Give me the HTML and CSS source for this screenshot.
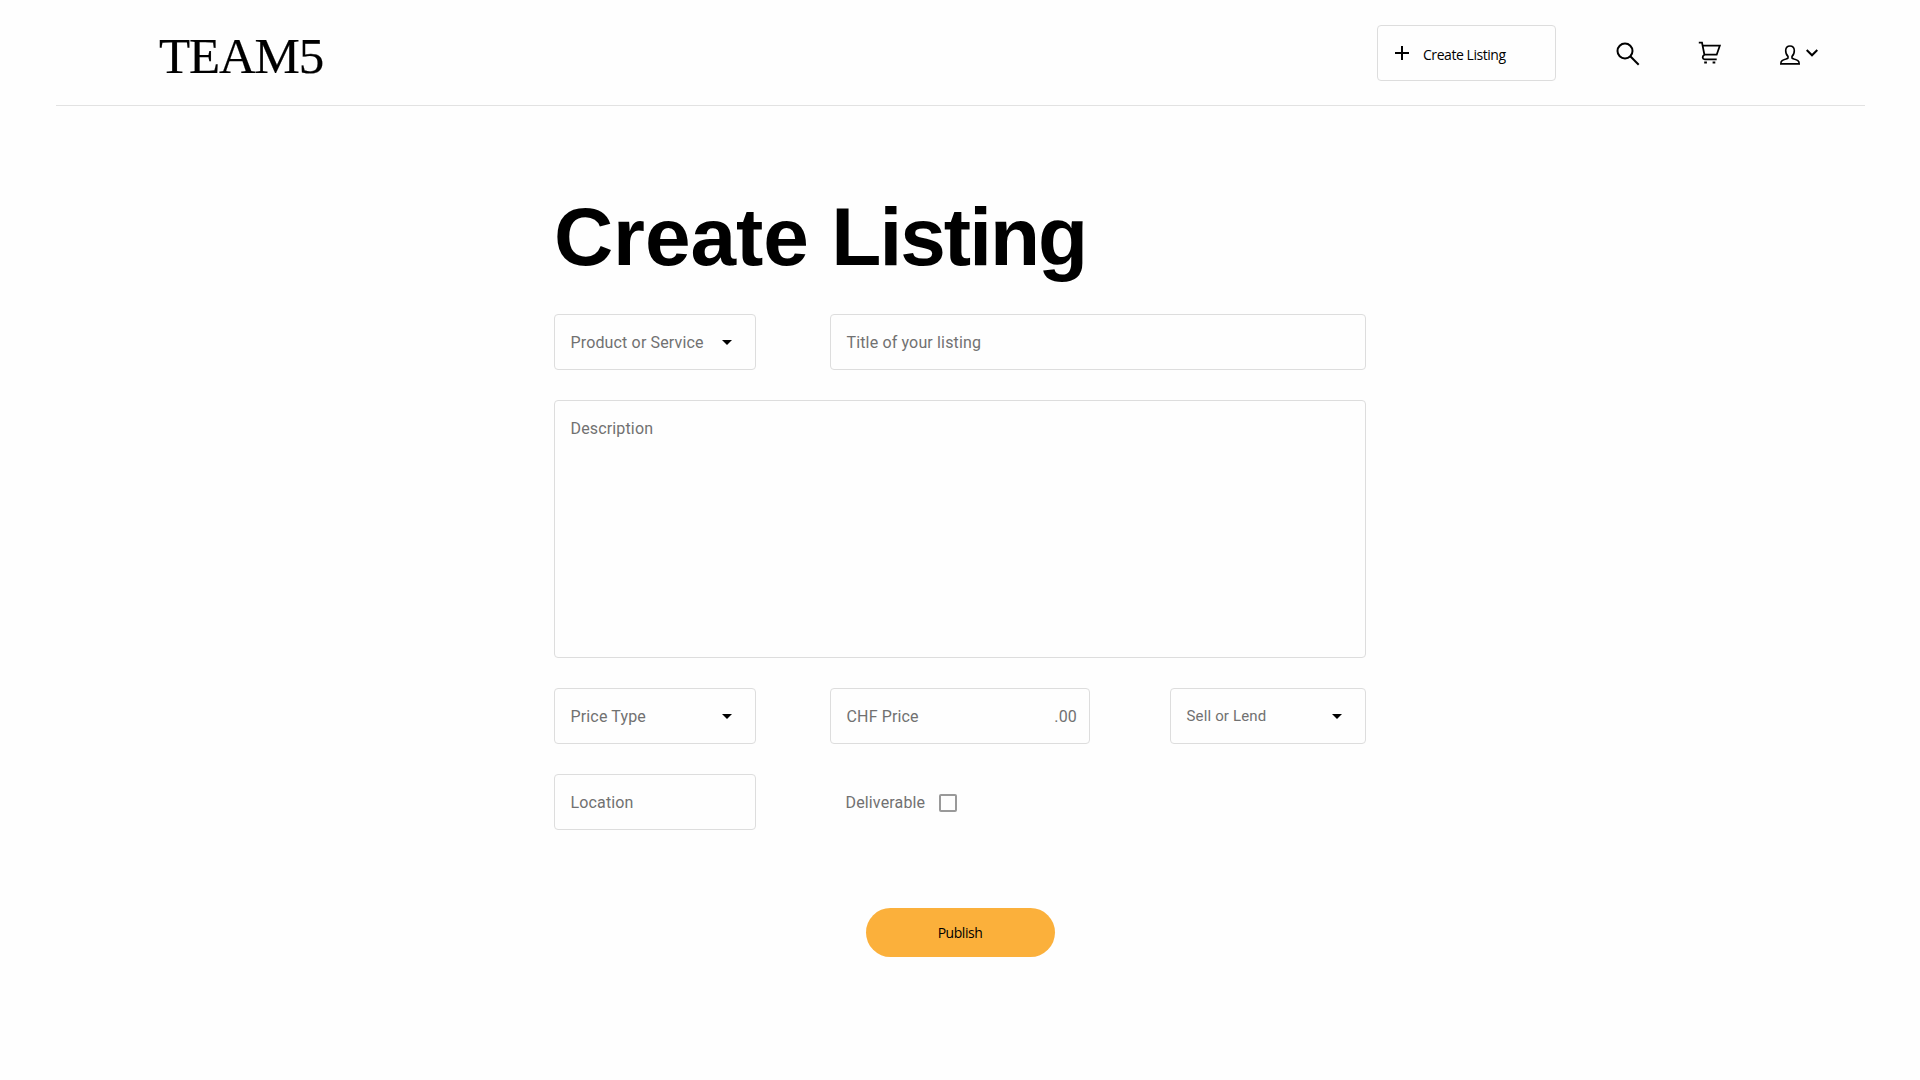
FILE: index.html
```html
<!DOCTYPE html>
<html lang="en">
<head>
<meta charset="utf-8">
<title>Create Listing</title>
<link rel="stylesheet" href="styles.css">
</head>
<body>
<header class="header">
  <a class="logo">TEAM5</a>
  <nav class="nav">
    <button class="create">
      <svg width="14" height="14" viewBox="0 0 14 14"><path d="M7 0v14M0 7h14" stroke="#000" stroke-width="2"/></svg>
      <span class="create-label">Create Listing</span>
    </button>
    <svg class="search" width="24" height="24" viewBox="0 0 24 24" fill="none" stroke="#000" stroke-width="2"><circle cx="9" cy="9" r="7.5"/><path d="M14.3 14.3L22.7 22.7"/></svg>
    <svg class="cart" width="24" height="24" viewBox="0 0 24 24" fill="none" stroke="#000" stroke-width="1.8"><path d="M.8 1.6H4L6.4 13.7H18.7L21.8 4.7H4.6M6.4 13.7Q4.4 15 4.7 16.7Q5 18.3 6.7 18.3H18.7"/><path d="M6.2 21.6h2.7M14.6 21.6h2.7" stroke-width="2"/></svg>
    <div class="account">
      <svg width="20" height="20" viewBox="0 0 20 20" fill="none" stroke="#000" stroke-width="1.6"><path d="M8 11.4C6.1 9.7 5.6 7.4 5.7 5.3C5.9 2.4 7.6 1 10 1S14.1 2.4 14.3 5.3C14.4 7.4 13.9 9.7 12 11.4V13Q12.3 13.5 14 14.1C17.4 15.1 19.2 15.8 19.2 18.9H.8C.8 15.8 2.6 15.1 6 14.1Q7.7 13.5 8 13Z"/></svg>
      <svg class="chevron" width="12" height="8" viewBox="0 0 12 8" fill="none" stroke="#000" stroke-width="2"><path d="M.7 1L6 6.3L11.3 1"/></svg>
    </div>
  </nav>
</header>
<main class="main">
  <h1 class="title">Create <span class="tight">Listing</span></h1>
  <form class="form">
    <div class="row">
      <div class="field short">Product or Service<i class="arrow"></i></div>
      <div class="field grow">Title of your listing</div>
    </div>
    <div class="field description">Description</div>
    <div class="row">
      <div class="field short">Price Type<i class="arrow"></i></div>
      <div class="field price"><span>CHF Price</span><span class="cents">.00</span></div>
      <div class="field sale"><span class="sale-label">Sell or Lend</span><i class="arrow"></i></div>
    </div>
    <div class="row">
      <div class="field short">Location</div>
      <label class="deliverable">Deliverable<span class="box"></span></label>
    </div>
    <button class="publish" type="button">Publish</button>
  </form>
</main>
</body>
</html>
```
FILE: styles.css
```css
* { box-sizing: border-box; }
body { margin: 0; background: #fefefe; color: #000; font-family: Roboto, sans-serif; }
button { font-family: "Open Sans", "Noto Sans", sans-serif; color: #000; }
svg { display: block; flex: none; }

.header { display: flex; justify-content: space-between; height: 106px; margin: 0 55px 0 56px; padding: 0 47px 0 103px; border-bottom: 1px solid #e2e2e2; }
.logo { font: 51px/60px "Liberation Serif", serif; letter-spacing: -1.2px; padding-top: 26px; -webkit-text-stroke: 0.2px #000; }
.nav { display: flex; align-items: flex-start; padding-top: 25px; }
.create { display: flex; align-items: center; gap: 14px; width: 179px; height: 56px; padding: 0 0 0 17px; border: 1px solid #ddd; border-radius: 4px; background: #fefefe; font-size: 14px; letter-spacing: -0.45px; }
.create-label { padding-top: 2px; }
.search { margin: 17px 0 0 60px; }
.cart { margin: 16px 0 0 58px; }
.account { display: flex; gap: 6px; margin: 20px 0 0 58px; }
.chevron { margin-top: 4px; }

.main { width: 812px; margin: 0 auto; padding-top: 95px; }
.title { margin: 0; height: 113px; font: bold 82px/72px "Liberation Sans", sans-serif; letter-spacing: -0.1px; white-space: nowrap; }
.tight { letter-spacing: -2px; }
.form { display: flex; flex-direction: column; gap: 30px; }
.row { display: flex; height: 56px; }
.field { display: flex; align-items: center; justify-content: space-between; padding: 0 15px 0 15.5px; border: 1px solid #ddd; border-radius: 4px; color: #717171; font-size: 16px; letter-spacing: 0.15px; }
.short { width: 202px; margin-right: 74px; padding-right: 23px; }
.grow { flex: 1; }
.description { height: 258px; align-items: flex-start; padding-top: 18px; }
.price { width: 260px; margin-right: 80px; padding-right: 12px; }
.sale { width: 196px; padding-right: 23px; }
.sale-label { font-size: 15px; }
.arrow { width: 10px; border: solid transparent; border-width: 5px 5px 0; border-top-color: #000; }
.deliverable { display: flex; align-items: center; gap: 13.5px; padding-left: 15.5px; color: #717171; font-size: 16px; letter-spacing: 0.15px; }
.box { width: 18px; height: 18px; margin-top: 1px; border: 2px solid #999; border-radius: 2px; }
.publish { align-self: center; width: 189px; height: 49px; margin-top: 48px; border: 0; border-radius: 25px; background: #fbb03b; font-size: 14px; letter-spacing: -0.45px; }
```
